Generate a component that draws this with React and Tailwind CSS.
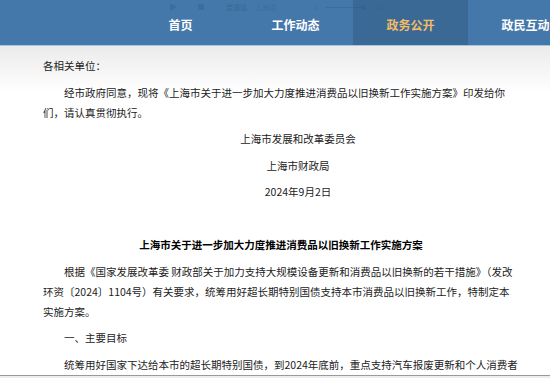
import React from 'react';

const tabs = ['首页', '工作动态', '政务公开', '政民互动'];

const Nav = () => {
  return (
    <header className="relative bg-[#4478aa] overflow-hidden">
      {/* faint audio player ghost */}
      <div className="absolute top-[3px] left-[170px] flex items-center opacity-25 text-[#274f7c] text-[7px] leading-[8px]">
        <svg width="7" height="8" viewBox="0 0 7 8"><path d="M0 0 L7 4 L0 8 Z" fill="#274f7c" /></svg>
        <span className="block ml-[21px] w-[6px] h-[6px] bg-[#274f7c]" />
        <span className="ml-[22px] font-bold">普通话</span>
        <span className="ml-[8px]">上海话</span>
        <span className="ml-[38px]">0</span>
        <span className="relative block ml-[8px] w-[40px] h-px bg-[#274f7c]">
          <span className="absolute right-0 -top-[2px] w-[5px] h-[5px] rounded-full bg-[#274f7c]" />
        </span>
        <span className="ml-[10px]">1.0</span>
      </div>
      <nav className="flex pl-[123px] h-[45px] w-max">
        {tabs.map((t, i) => (
          <div
            key={t}
            className={
              i === 2
                ? 'w-[115px] flex items-center justify-center pt-[4px] bg-[#3b6996] text-[#f2bc66] font-bold text-[12px]'
                : 'w-[115px] flex items-center justify-center pt-[4px] text-white font-bold text-[12px]'
            }
          >
            {t}
          </div>
        ))}
      </nav>
      <div className="h-[1px] bg-[#a9c3e2]" />
    </header>
  );
};

const P = ({ children, className = '' }) => (
  <p className={'leading-[20px] mb-[6.5px] whitespace-nowrap ' + className}>{children}</p>
);

const App = () => {
  return (
    <div
      className="w-[550px] h-[378px] overflow-hidden bg-white flex flex-col"
      style={{ fontFamily: '"Microsoft YaHei", "Noto Sans CJK SC", "Noto Sans", sans-serif' }}
    >
      <Nav />
      <main className="flex-1 min-h-0 overflow-hidden bg-gradient-to-b from-[#ebebeb] via-white via-[14%] to-white pl-[43px] pr-[31px] pt-[10px] text-[10.5px] text-[#222]">
        <P>各相关单位：</P>
        <P className="indent-[21px]">
          经市政府同意，现将《上海市关于进一步加大力度推进消费品以旧换新工作实施方案》印发给你
          <br />
          们，请认真贯彻执行。
        </P>
        <P className="text-center pl-[34px]">上海市发展和改革委员会</P>
        <P className="text-center pl-[34px]">上海市财政局</P>
        <P className="text-center pl-[34px]">2024年9月2日</P>
        <P>&nbsp;</P>
        <P className="text-center font-bold text-black">上海市关于进一步加大力度推进消费品以旧换新工作实施方案</P>
        <P className="indent-[21px]">
          根据《国家发展改革委 财政部关于加力支持大规模设备更新和消费品以旧换新的若干措施》（发改
          <br />
          环资〔2024〕1104号）有关要求，统筹用好超长期特别国债支持本市消费品以旧换新工作，特制定本
          <br />
          实施方案。
        </P>
        <P className="indent-[21px]">一、主要目标</P>
        <P className="indent-[21px]">统筹用好国家下达给本市的超长期特别国债，到2024年底前，重点支持汽车报废更新和个人消费者</P>
      </main>
      <div className="h-[3px] shrink-0 border-t border-[#9a9a9a] bg-[#eeeeee]" />
    </div>
  );
};

export default App;
